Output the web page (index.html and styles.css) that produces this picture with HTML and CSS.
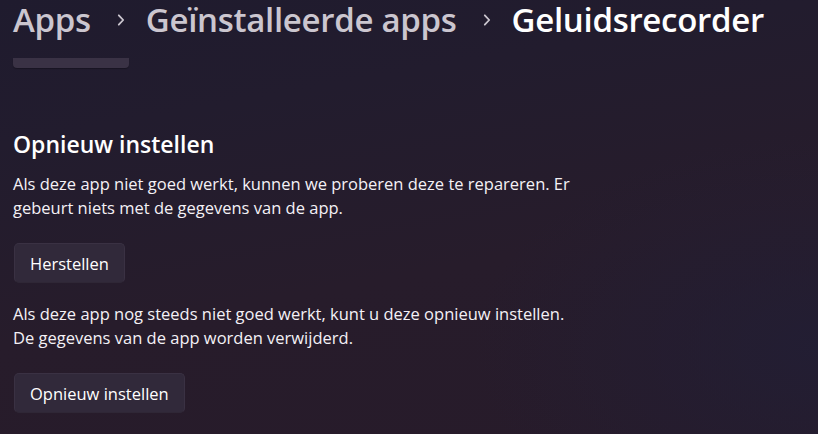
FILE: index.html
```html
<!DOCTYPE html>
<html lang="nl">
<head>
	<meta charset="UTF-8">
	<meta name="viewport" content="width=device-width, initial-scale=1.0">
	<title>Geluidsrecorder</title>
	<link rel="stylesheet" href="styles.css">
</head>
<body>
	<header class="crumbs">
		<span class="crumb">Apps</span>
		<svg class="chevron" width="8" height="12" viewBox="0 0 8 12"><path d="M1.8 1.3 L6.2 6 L1.8 10.7" fill="none" stroke="currentColor" stroke-width="1.8" stroke-linecap="round" stroke-linejoin="round"/></svg>
		<span class="crumb">Geïnstalleerde apps</span>
		<svg class="chevron" width="8" height="12" viewBox="0 0 8 12"><path d="M1.8 1.3 L6.2 6 L1.8 10.7" fill="none" stroke="currentColor" stroke-width="1.8" stroke-linecap="round" stroke-linejoin="round"/></svg>
		<span class="crumb current">Geluidsrecorder</span>
	</header>

	<div class="scrolled">
		<div class="cut-button"></div>
	</div>

	<section class="reset">
		<h2>Opnieuw instellen</h2>
		<p>Als deze app niet goed werkt, kunnen we proberen deze te repareren. Er gebeurt niets met de gegevens van de app.</p>
		<button class="btn">Herstellen</button>
		<p>Als deze app nog steeds niet goed werkt, kunt u deze opnieuw instellen. De gegevens van de app worden verwijderd.</p>
		<button class="btn">Opnieuw instellen</button>
	</section>
</body>
</html>
```

FILE: styles.css
```css
html, body {
	height: 100%;
}

body {
	margin: 0;
	padding: 0 13px;
	font-family: "Open Sans", "Noto Sans", sans-serif;
	color: #ffffff;
	background-color: #251c2c;
	background-image:
		radial-gradient(ellipse 60% 70% at 100% 80%, rgba(34, 30, 52, 0.9), rgba(34, 30, 52, 0) 70%),
		linear-gradient(170deg, #1f1b2e 0%, #221c2e 25%, #271c2b 60%, #271b2a 100%);
	overflow: hidden;
}

/* Breadcrumb title */
.crumbs {
	display: flex;
	align-items: center;
	height: 46px;
	padding-bottom: 6px;
	box-sizing: border-box;
	font-size: 33px;
	font-weight: 600;
	line-height: 40px;
	letter-spacing: -0.3px;
}

.crumb {
	color: #cbc6cf;
}

.crumb.current {
	color: #ffffff;
}

.chevron {
	flex: none;
	margin: 0 21px 0 26px;
	color: #cbc6cf;
}

/* Bottom of a button scrolled under the header */
.scrolled {
	padding-top: 12px;
}

.cut-button {
	width: 116px;
	height: 10px;
	background-color: #3a3245;
	border-radius: 0 0 4px 4px;
	box-shadow: 0 1px 1px rgba(0, 0, 0, 0.25);
}

.reset {
	padding-top: 61px;
}

.reset h2 {
	margin: 0 0 13px;
	font-size: 23px;
	font-weight: 600;
	line-height: 30px;
}

.reset p {
	margin: 0;
	width: 571px;
	font-size: 16.5px;
	line-height: 24px;
	color: #f4f1f6;
}

.btn {
	display: block;
	margin: 23px 0 19px 1px;
	height: 40px;
	padding: 0 15px;
	font-family: inherit;
	font-size: 16.5px;
	color: #ffffff;
	background-color: #31293a;
	border: 1px solid #3a3143;
	border-bottom-color: #2f2736;
	border-radius: 5px;
	cursor: pointer;
}
```
